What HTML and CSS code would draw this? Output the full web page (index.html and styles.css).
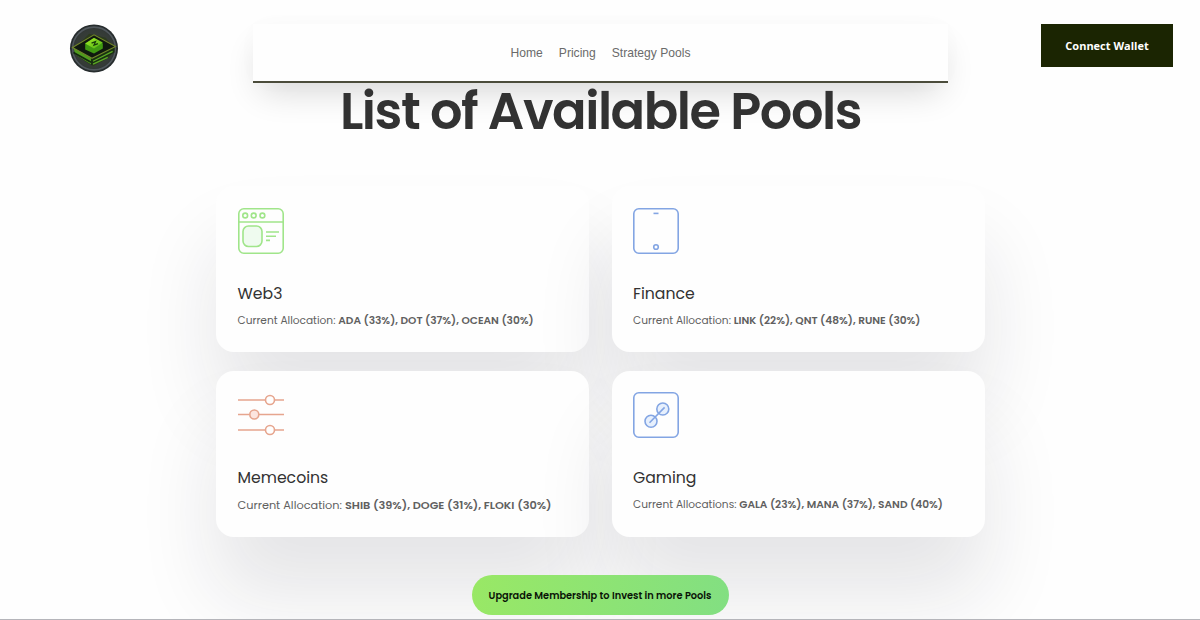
FILE: index.html
```html
<!DOCTYPE html>
<html lang="en">
<head>
<meta charset="utf-8">
<title>List of Available Pools</title>
<link rel="stylesheet" href="styles.css">
</head>
<body>
<div class="page">
  <header class="header">
    <svg class="logo" viewBox="0 0 50 50" role="img" aria-label="Logo">
      <defs>
        <radialGradient id="disc"><stop offset="0" stop-color="#3c4538"/><stop offset=".8" stop-color="#343a37"/><stop offset="1" stop-color="#23292b"/></radialGradient>
        <linearGradient id="glow" x1="0" y1="0" x2="1" y2="1"><stop offset="0" stop-color="#a6f028"/><stop offset="1" stop-color="#4fb314"/></linearGradient>
      </defs>
      <circle cx="25" cy="25" r="24.5" fill="url(#disc)"/>
      <circle cx="25" cy="25" r="21.8" fill="none" stroke="#50575c" stroke-width="1.6"/>
      <path d="M6 24L20 10L37 14L45 24L41 34L24 43L8 33Z" fill="#2c3a1e"/>
      <path d="M4 24L22 35V41L6 31Z" fill="#4f9c1d"/>
      <path d="M4 29L22 39" stroke="#142810" stroke-width="1.8"/>
      <path d="M22 35L46 24V29L22 42Z" fill="#193011"/>
      <path d="M24 38L44 28M24 41L39 34" stroke="#5aa824" stroke-width="1.3"/>
      <path d="M3 24L25 11L47 23L23 35Z" fill="#10190f" stroke="#71852a" stroke-width="1.1"/>
      <path d="M16 20L25 15L34 20V25L25 30L16 26Z" fill="#409a12"/>
      <path d="M16 20L25 14L34 19L25 25Z" fill="url(#glow)"/>
      <path d="M22.5 19.5l4-1.5-1.5 3.5 4-1.5" fill="none" stroke="#183d0b" stroke-width="1.3"/>
    </svg>
    <nav class="nav">
      <a class="nav-link">Home</a>
      <a class="nav-link">Pricing</a>
      <a class="nav-link">Strategy Pools</a>
    </nav>
    <button class="wallet">Connect Wallet</button>
  </header>
  <main class="main">
    <h1 class="title">List of Available Pools</h1>
    <section class="pools">
      <article class="card">
        <svg class="icon green" viewBox="0 0 46 46">
          <rect x=".8" y=".8" width="44.4" height="44.4" rx="5"/>
          <path d="M1 14H45"/>
          <circle cx="7.2" cy="7.5" r="2.4"/><circle cx="15.7" cy="7.5" r="2.4"/><circle cx="24.4" cy="7.5" r="2.4"/>
          <rect class="tint" x="5" y="18" width="19" height="20.5" rx="5.5"/>
          <path d="M28 24H41M28 28.2H38M28 32.4H32"/>
        </svg>
        <h2 class="name">Web3</h2>
        <p class="allocation">Current Allocation: <b>ADA (33%), DOT (37%), OCEAN (30%)</b></p>
      </article>
      <article class="card">
        <svg class="icon blue" viewBox="0 0 46 46">
          <rect x=".8" y=".8" width="44.4" height="44.4" rx="5"/>
          <path d="M20.5 5.4H25.5"/><circle cx="23" cy="39" r="2.3"/>
        </svg>
        <h2 class="name">Finance</h2>
        <p class="allocation">Current Allocation: <b>LINK (22%), QNT (48%), RUNE (30%)</b></p>
      </article>
      <article class="card card-lower">
        <svg class="icon coral" viewBox="0 0 46 46">
          <path d="M0 8H27.5M36.5 8H46M0 22.5H11.5M20.5 22.5H46M0 38H27.5M36.5 38H46"/>
          <circle cx="32" cy="8" r="4.5"/><circle class="tint" cx="16.3" cy="22.5" r="4.5"/><circle cx="32" cy="38" r="4.5"/>
        </svg>
        <h2 class="name">Memecoins</h2>
        <p class="allocation allocation-large">Current Allocation: <b>SHIB (39%), DOGE (31%), FLOKI (30%)</b></p>
      </article>
      <article class="card card-lower">
        <svg class="icon blue" viewBox="0 0 46 46">
          <rect x=".8" y=".8" width="44.4" height="44.4" rx="5"/>
          <circle class="tint" cx="29.8" cy="17" r="6"/><circle class="tint" cx="18" cy="29.2" r="6"/><path d="M16.5 30.8L31.6 15.4"/>
        </svg>
        <h2 class="name">Gaming</h2>
        <p class="allocation">Current Allocations: <b>GALA (23%), MANA (37%), SAND (40%)</b></p>
      </article>
    </section>
    <button class="upgrade">Upgrade Membership to Invest in more Pools</button>
  </main>
</div>
</body>
</html>
```
FILE: styles.css
```css
* { box-sizing: border-box; }
body { margin: 0; background: #fefefe; color: #323232; font-family: Poppins, Inter, sans-serif; }
.page { height: 620px; overflow: hidden; border-bottom: 1px solid #b5b5ba; }
.header { display: grid; grid-template-columns: 184px 695px 1fr; padding: 24px 27px 0 69px; height: 84px; align-items: start; }
.logo { width: 50px; height: 49px; }
.nav { height: 59px; display: flex; align-items: center; justify-content: center; gap: 16px; padding-top: 1px; border-bottom: 2px solid #4b4c3b; background: #fefefe; box-shadow: 0 16px 34px -8px rgba(0,0,0,.16), 0 0 28px rgba(0,0,0,.015); }
.nav-link { font: 12.1px/20px "Liberation Sans", sans-serif; color: #6a6a6a; }
.wallet { justify-self: end; width: 132px; height: 43px; padding: 0; border: 0; background: #1b2502; color: #fff; font: bold 11px/20px "Open Sans", sans-serif; }
.main { display: flex; flex-direction: column; align-items: center; }
.title { position: relative; margin: 0; height: 102px; padding-left: 1px; font-size: 51px; line-height: 54px; font-weight: 600; letter-spacing: -1.45px; white-space: nowrap; }
.pools { display: grid; grid-template-columns: 373px 373px; grid-template-rows: 166px 166px; gap: 19px 23px; }
.card { padding: 22px 21.5px 0; border-radius: 18px; background: #fefefe; box-shadow: 0 58px 80px rgba(25,25,45,.11); }
.card:nth-child(odd) { padding-left: 22px; }
.card-lower { padding-top: 21px; }
.icon { display: block; width: 46px; height: 46px; fill: none; stroke-width: 1.6; }
.green { stroke: #a0e58a; --tint: #effbef; }
.blue { stroke: #83a5e3; --tint: #e7f0fd; }
.coral { stroke: #e6a58e; --tint: #fce5df; }
.tint { fill: var(--tint); }
.name { margin: 27px 0 0; font-size: 15.7px; line-height: 26px; font-weight: 400; }
.allocation { margin: 4px 0 0; font-size: 10.6px; line-height: 20px; color: #606060; white-space: nowrap; }
.allocation b { font-weight: 600; }
.allocation-large { font-size: 11.3px; }
.upgrade { margin-top: 38px; width: 257px; height: 40px; padding: 1px 0 0; border: 0; border-radius: 20px; background: linear-gradient(100deg, #99e865, #82df82); color: #091306; font: 600 9.8px/20px Poppins, Inter, sans-serif; white-space: nowrap; }
```
